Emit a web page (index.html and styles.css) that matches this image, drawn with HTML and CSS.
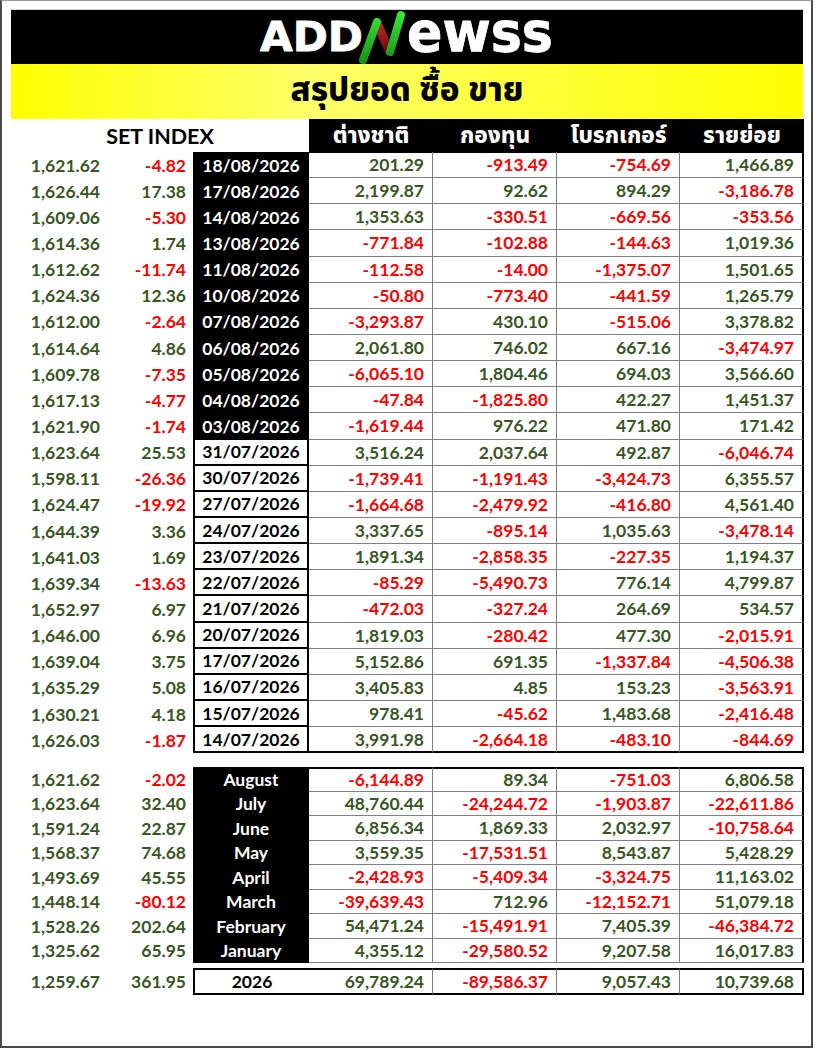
FILE: index.html
```html
<!DOCTYPE html>
<html lang="th">
<head>
<meta charset="utf-8">
<title>ADDNewss สรุปยอด ซื้อ ขาย</title>
<link rel="stylesheet" href="styles.css">
</head>
<body>
<div class="page">
  <div class="banner">
    <svg class="logo" viewBox="0 0 300 54" width="300" height="54" role="img" aria-label="ADDNewss">
      <defs>
        <linearGradient id="gN" gradientUnits="userSpaceOnUse" x1="0" y1="54" x2="0" y2="0">
          <stop offset="0" stop-color="#159015"/>
          <stop offset="1" stop-color="#3ee83e"/>
        </linearGradient>
        <linearGradient id="rN" gradientUnits="userSpaceOnUse" x1="0" y1="12" x2="0" y2="44">
          <stop offset="0" stop-color="#c4242b"/>
          <stop offset="1" stop-color="#5e0c0c"/>
        </linearGradient>
      </defs>
      <text class="logo-cap" x="3" y="41" textLength="103" lengthAdjust="spacingAndGlyphs">ADD</text>
      <line x1="120" y1="13" x2="133" y2="43" stroke="url(#rN)" stroke-width="9"/>
      <line x1="106" y1="50" x2="120" y2="12" stroke="url(#gN)" stroke-width="8" stroke-linecap="round"/>
      <line x1="133" y1="42" x2="144" y2="5" stroke="url(#gN)" stroke-width="8" stroke-linecap="round"/>
      <text class="logo-low" x="150" y="41" textLength="146" lengthAdjust="spacingAndGlyphs">ewss</text>
    </svg>
  </div>
  <div class="titlebar"><h1>สรุปยอด ซื้อ ขาย</h1></div>

  <div class="head">
    <div class="h-set">SET INDEX</div>
    <div class="h-col">ต่างชาติ</div>
    <div class="h-col">กองทุน</div>
    <div class="h-col">โบรกเกอร์</div>
    <div class="h-col">รายย่อย</div>
  </div>

  <div class="daily">
    <div class="row"><span class="idx">1,621.62</span><span class="chg r">-4.82</span><span class="date dark">18/08/2026</span><span class="cell g">201.29</span><span class="cell r">-913.49</span><span class="cell r">-754.69</span><span class="cell g">1,466.89</span></div>
    <div class="row"><span class="idx">1,626.44</span><span class="chg g">17.38</span><span class="date dark">17/08/2026</span><span class="cell g">2,199.87</span><span class="cell g">92.62</span><span class="cell g">894.29</span><span class="cell r">-3,186.78</span></div>
    <div class="row"><span class="idx">1,609.06</span><span class="chg r">-5.30</span><span class="date dark">14/08/2026</span><span class="cell g">1,353.63</span><span class="cell r">-330.51</span><span class="cell r">-669.56</span><span class="cell r">-353.56</span></div>
    <div class="row"><span class="idx">1,614.36</span><span class="chg g">1.74</span><span class="date dark">13/08/2026</span><span class="cell r">-771.84</span><span class="cell r">-102.88</span><span class="cell r">-144.63</span><span class="cell g">1,019.36</span></div>
    <div class="row"><span class="idx">1,612.62</span><span class="chg r">-11.74</span><span class="date dark">11/08/2026</span><span class="cell r">-112.58</span><span class="cell r">-14.00</span><span class="cell r">-1,375.07</span><span class="cell g">1,501.65</span></div>
    <div class="row"><span class="idx">1,624.36</span><span class="chg g">12.36</span><span class="date dark">10/08/2026</span><span class="cell r">-50.80</span><span class="cell r">-773.40</span><span class="cell r">-441.59</span><span class="cell g">1,265.79</span></div>
    <div class="row"><span class="idx">1,612.00</span><span class="chg r">-2.64</span><span class="date dark">07/08/2026</span><span class="cell r">-3,293.87</span><span class="cell g">430.10</span><span class="cell r">-515.06</span><span class="cell g">3,378.82</span></div>
    <div class="row"><span class="idx">1,614.64</span><span class="chg g">4.86</span><span class="date dark">06/08/2026</span><span class="cell g">2,061.80</span><span class="cell g">746.02</span><span class="cell g">667.16</span><span class="cell r">-3,474.97</span></div>
    <div class="row"><span class="idx">1,609.78</span><span class="chg r">-7.35</span><span class="date dark">05/08/2026</span><span class="cell r">-6,065.10</span><span class="cell g">1,804.46</span><span class="cell g">694.03</span><span class="cell g">3,566.60</span></div>
    <div class="row"><span class="idx">1,617.13</span><span class="chg r">-4.77</span><span class="date dark">04/08/2026</span><span class="cell r">-47.84</span><span class="cell r">-1,825.80</span><span class="cell g">422.27</span><span class="cell g">1,451.37</span></div>
    <div class="row"><span class="idx">1,621.90</span><span class="chg r">-1.74</span><span class="date dark">03/08/2026</span><span class="cell r">-1,619.44</span><span class="cell g">976.22</span><span class="cell g">471.80</span><span class="cell g">171.42</span></div>
    <div class="row"><span class="idx">1,623.64</span><span class="chg g">25.53</span><span class="date light">31/07/2026</span><span class="cell g">3,516.24</span><span class="cell g">2,037.64</span><span class="cell g">492.87</span><span class="cell r">-6,046.74</span></div>
    <div class="row"><span class="idx">1,598.11</span><span class="chg r">-26.36</span><span class="date light">30/07/2026</span><span class="cell r">-1,739.41</span><span class="cell r">-1,191.43</span><span class="cell r">-3,424.73</span><span class="cell g">6,355.57</span></div>
    <div class="row"><span class="idx">1,624.47</span><span class="chg r">-19.92</span><span class="date light">27/07/2026</span><span class="cell r">-1,664.68</span><span class="cell r">-2,479.92</span><span class="cell r">-416.80</span><span class="cell g">4,561.40</span></div>
    <div class="row"><span class="idx">1,644.39</span><span class="chg g">3.36</span><span class="date light">24/07/2026</span><span class="cell g">3,337.65</span><span class="cell r">-895.14</span><span class="cell g">1,035.63</span><span class="cell r">-3,478.14</span></div>
    <div class="row"><span class="idx">1,641.03</span><span class="chg g">1.69</span><span class="date light">23/07/2026</span><span class="cell g">1,891.34</span><span class="cell r">-2,858.35</span><span class="cell r">-227.35</span><span class="cell g">1,194.37</span></div>
    <div class="row"><span class="idx">1,639.34</span><span class="chg r">-13.63</span><span class="date light">22/07/2026</span><span class="cell r">-85.29</span><span class="cell r">-5,490.73</span><span class="cell g">776.14</span><span class="cell g">4,799.87</span></div>
    <div class="row"><span class="idx">1,652.97</span><span class="chg g">6.97</span><span class="date light">21/07/2026</span><span class="cell r">-472.03</span><span class="cell r">-327.24</span><span class="cell g">264.69</span><span class="cell g">534.57</span></div>
    <div class="row"><span class="idx">1,646.00</span><span class="chg g">6.96</span><span class="date light">20/07/2026</span><span class="cell g">1,819.03</span><span class="cell r">-280.42</span><span class="cell g">477.30</span><span class="cell r">-2,015.91</span></div>
    <div class="row"><span class="idx">1,639.04</span><span class="chg g">3.75</span><span class="date light">17/07/2026</span><span class="cell g">5,152.86</span><span class="cell g">691.35</span><span class="cell r">-1,337.84</span><span class="cell r">-4,506.38</span></div>
    <div class="row"><span class="idx">1,635.29</span><span class="chg g">5.08</span><span class="date light">16/07/2026</span><span class="cell g">3,405.83</span><span class="cell g">4.85</span><span class="cell g">153.23</span><span class="cell r">-3,563.91</span></div>
    <div class="row"><span class="idx">1,630.21</span><span class="chg g">4.18</span><span class="date light">15/07/2026</span><span class="cell g">978.41</span><span class="cell r">-45.62</span><span class="cell g">1,483.68</span><span class="cell r">-2,416.48</span></div>
    <div class="row last"><span class="idx">1,626.03</span><span class="chg r">-1.87</span><span class="date light">14/07/2026</span><span class="cell g">3,991.98</span><span class="cell r">-2,664.18</span><span class="cell r">-483.10</span><span class="cell r">-844.69</span></div>
  </div>

  <div class="monthly">
    <div class="row first"><span class="idx">1,621.62</span><span class="chg r">-2.02</span><span class="date dark">August</span><span class="cell r">-6,144.89</span><span class="cell g">89.34</span><span class="cell r">-751.03</span><span class="cell g">6,806.58</span></div>
    <div class="row"><span class="idx">1,623.64</span><span class="chg g">32.40</span><span class="date dark">July</span><span class="cell g">48,760.44</span><span class="cell r">-24,244.72</span><span class="cell r">-1,903.87</span><span class="cell r">-22,611.86</span></div>
    <div class="row"><span class="idx">1,591.24</span><span class="chg g">22.87</span><span class="date dark">June</span><span class="cell g">6,856.34</span><span class="cell g">1,869.33</span><span class="cell g">2,032.97</span><span class="cell r">-10,758.64</span></div>
    <div class="row"><span class="idx">1,568.37</span><span class="chg g">74.68</span><span class="date dark">May</span><span class="cell g">3,559.35</span><span class="cell r">-17,531.51</span><span class="cell g">8,543.87</span><span class="cell g">5,428.29</span></div>
    <div class="row"><span class="idx">1,493.69</span><span class="chg g">45.55</span><span class="date dark">April</span><span class="cell r">-2,428.93</span><span class="cell r">-5,409.34</span><span class="cell r">-3,324.75</span><span class="cell g">11,163.02</span></div>
    <div class="row"><span class="idx">1,448.14</span><span class="chg r">-80.12</span><span class="date dark">March</span><span class="cell r">-39,639.43</span><span class="cell g">712.96</span><span class="cell r">-12,152.71</span><span class="cell g">51,079.18</span></div>
    <div class="row"><span class="idx">1,528.26</span><span class="chg g">202.64</span><span class="date dark">February</span><span class="cell g">54,471.24</span><span class="cell r">-15,491.91</span><span class="cell g">7,405.39</span><span class="cell r">-46,384.72</span></div>
    <div class="row"><span class="idx">1,325.62</span><span class="chg g">65.95</span><span class="date dark">January</span><span class="cell g">4,355.12</span><span class="cell r">-29,580.52</span><span class="cell g">9,207.58</span><span class="cell g">16,017.83</span></div>
  </div>

  <div class="total">
    <div class="row"><span class="idx">1,259.67</span><span class="chg g">361.95</span><span class="date year">2026</span><span class="cell g">69,789.24</span><span class="cell r">-89,586.37</span><span class="cell g">9,057.43</span><span class="cell g">10,739.68</span></div>
  </div>
</div>
</body>
</html>
```

FILE: styles.css
```css
* { box-sizing: border-box; }
html, body { margin: 0; padding: 0; background: #fff; }

.page {
  width: 813px;
  height: 1048px;
  border-left: 2px solid #4a4a4a;
  border-right: 2px solid #4a4a4a;
  border-bottom: 2px solid #4a4a4a;
  border-top: 1px solid #9a9a9a;
  padding: 8px 7px 0 9px;
  font-family: Lato, "Noto Sans Thai", "Noto Sans", sans-serif;
  font-weight: 700;
  font-size: 17.5px;
}

.banner {
  height: 55px;
  background: #000;
  border-top: 1px solid #d6d6d6;
  display: flex;
  justify-content: center;
  width: 792px;
}
.logo { display: block; overflow: visible; }
.logo-cap, .logo-low {
  fill: #fff;
  stroke: #fff;
  stroke-width: 0.8;
  stroke-linejoin: round;
  font-family: "DejaVu Sans", sans-serif;
  font-weight: 700;
}
.logo-cap { font-size: 41px; }
.logo-low { font-size: 55px; }

.titlebar {
  height: 55px;
  width: 792px;
  background: linear-gradient(90deg, #ffff00 0%, #ffff6a 38%, #ffff3a 65%, #ffff00 100%);
  display: flex;
  align-items: center;
  justify-content: center;
}
.titlebar h1 {
  margin: 0;
  font-family: "Noto Sans Thai", "Noto Sans", Tahoma, sans-serif;
  font-size: 33px;
  font-weight: 800;
  color: #000;
  line-height: 1;
}

.head, .row {
  display: grid;
  grid-template-columns: 94px 88px 116px 124px 124px 123px 124px;
}
.head { height: 33px; }
.h-set {
  grid-column: 1 / 4;
  display: flex;
  align-items: center;
  justify-content: center;
  font-size: 21.5px;
  color: #000;
}
.h-col {
  background: #000;
  color: #fff;
  display: flex;
  align-items: center;
  justify-content: center;
  font-family: "Noto Sans Thai", "Noto Sans", Tahoma, sans-serif;
  font-size: 22.5px;
  font-weight: 800;
}

.row > span {
  display: flex;
  align-items: center;
  white-space: nowrap;
}
.idx { justify-content: flex-end; padding-right: 5px; color: #375623; }
.chg { justify-content: flex-end; padding-right: 7px; }
.date { justify-content: center; color: #000; }
.date.dark { background: #000; color: #fff; }
.date.light {
  border-left: 2px solid #000;
  border-right: 2px solid #000;
  border-bottom: 2px solid #000;
}
.cell {
  justify-content: flex-end;
  padding-right: 8px;
  border-right: 1px solid #808080;
  border-bottom: 1px solid #808080;
}
.cell:last-child { border-right: 2px solid #000; }

.g { color: #375623; }
.r { color: #ff0000; }

.daily .row { height: 26.15px; }
.daily .row.last .cell { border-bottom: 2px solid #000; }

.monthly { margin-top: 14px; }
.monthly .row { height: 24.5px; }
.monthly .row.first .cell { border-top: 2px solid #000; }

.total { margin-top: 5px; }
.total .row { height: 27px; }
.total .date.year {
  border: 2px solid #000;
  border-right: none;
}
.total .cell {
  border-top: 2px solid #000;
  border-bottom: 2px solid #000;
  border-right: 1px solid #808080;
}
.total .cell:last-child { border-right: 2px solid #000; }
```
